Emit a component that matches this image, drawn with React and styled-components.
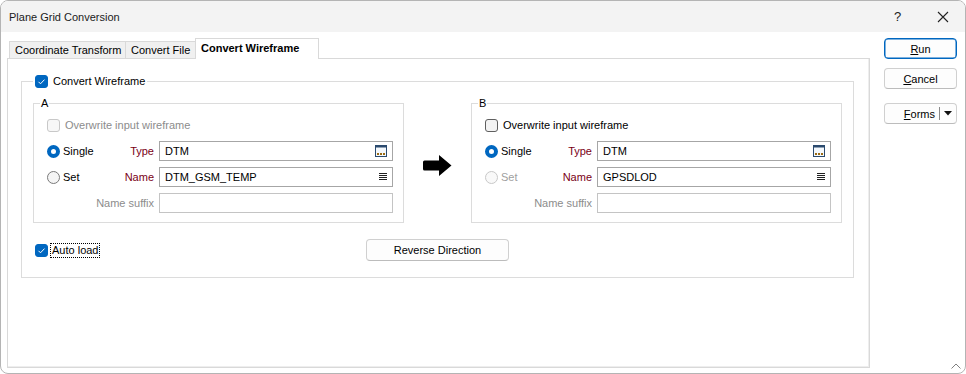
import React from "react"
import styled, { createGlobalStyle } from "styled-components"

const GlobalStyle = createGlobalStyle`
  html, body {
    margin: 0;
    padding: 0;
    background: #fff;
  }
  body {
    font-family: "Liberation Sans", Arial, sans-serif;
    font-size: 11px;
    color: #000;
  }
`

function CheckBox({ checked, disabled }) {
  return (
    <Box $checked={checked} $disabled={disabled}>
      {checked && (
        <svg width="13" height="13" viewBox="0 0 13 13">
          <polyline
            points="3.5,6.8 5.5,8.8 9.5,4.6"
            fill="none"
            stroke="#fff"
            strokeWidth="1"
          />
        </svg>
      )}
    </Box>
  )
}

function Radio({ checked, disabled }) {
  return <RadioDot $checked={checked} $disabled={disabled} />
}

function BrowseIcon() {
  return (
    <svg width="12" height="12" viewBox="0 0 12 12">
      <rect x="0.5" y="0.5" width="11" height="11" fill="#f4f8fc" stroke="#2b4a6e" />
      <rect x="0.5" y="0.5" width="11" height="2" fill="#2b4a6e" />
      <rect x="2" y="8" width="2" height="2" fill="#9a6a12" />
      <rect x="5" y="8" width="2" height="2" fill="#9a6a12" />
      <rect x="8" y="8" width="2" height="2" fill="#9a6a12" />
    </svg>
  )
}

function ListIcon() {
  return (
    <svg width="8" height="8" viewBox="0 0 8 8">
      <rect x="0" y="0" width="8" height="1" fill="#222" />
      <rect x="0" y="2" width="8" height="1" fill="#222" />
      <rect x="0" y="4" width="8" height="1" fill="#222" />
      <rect x="0" y="6" width="8" height="1" fill="#222" />
    </svg>
  )
}

function Field({ value, icon, disabled }) {
  return (
    <Input $disabled={disabled}>
      <span>{value}</span>
      {icon === "browse" && <BrowseIcon />}
      {icon === "list" && <ListIcon />}
    </Input>
  )
}

function WireframeGroup({ title, overwriteDisabled, setDisabled, name }) {
  return (
    <SubGroup>
      <SubLegend>{title}</SubLegend>
      <FormGrid>
        <CheckRow $disabled={overwriteDisabled}>
          <CheckBox disabled={overwriteDisabled} />
          Overwrite input wireframe
        </CheckRow>
        <RadioLabel>
          <Radio checked />
          Single
        </RadioLabel>
        <FieldLabel>Type</FieldLabel>
        <Field value="DTM" icon="browse" />
        <RadioLabel $disabled={setDisabled}>
          <Radio disabled={setDisabled} />
          Set
        </RadioLabel>
        <FieldLabel>Name</FieldLabel>
        <Field value={name} icon="list" />
        <span />
        <FieldLabel $muted>Name suffix</FieldLabel>
        <Field value="" disabled />
      </FormGrid>
    </SubGroup>
  )
}

export default function App() {
  return (
    <>
      <GlobalStyle />
      <Window>
        <TitleBar>
          <TitleText>Plane Grid Conversion</TitleText>
          <TitleButton>?</TitleButton>
          <TitleButton>
            <svg width="12" height="12" viewBox="0 0 12 12">
              <path d="M1 1 L11 11 M11 1 L1 11" stroke="#222" strokeWidth="1.1" />
            </svg>
          </TitleButton>
        </TitleBar>

        <Body>
          <TabArea>
            <TabStrip>
              <Tab $w={117}>Coordinate Transform</Tab>
              <Tab $w={71}>Convert File</Tab>
              <Tab $w={124} $active>
                Convert Wireframe
              </Tab>
            </TabStrip>
            <Panel>
              <MainGroup>
                <MainLegend>
                  <CheckBox checked />
                  Convert Wireframe
                </MainLegend>
                <GroupRow>
                  <WireframeGroup
                    title="A"
                    overwriteDisabled
                    name="DTM_GSM_TEMP"
                  />
                  <ArrowCell>
                    <svg width="29" height="21" viewBox="0 0 29 21">
                      <path
                        d="M1.5 5.5 H16 V0 L28.5 10.5 L16 21 V15.5 H1.5 Q0 15.5 0 14 V7 Q0 5.5 1.5 5.5 Z"
                        fill="#000"
                      />
                    </svg>
                  </ArrowCell>
                  <WireframeGroup title="B" setDisabled name="GPSDLOD" />
                </GroupRow>
                <BottomRow>
                  <AutoLoad>
                    <CheckBox checked />
                    <FocusLabel>Auto load</FocusLabel>
                  </AutoLoad>
                  <PushButton $w={143} $h={22}>
                    Reverse Direction
                  </PushButton>
                  <span />
                </BottomRow>
              </MainGroup>
            </Panel>
          </TabArea>

          <ButtonColumn>
            <PushButton $primary>
              <u>R</u>un
            </PushButton>
            <PushButton $top={9}>
              <u>C</u>ancel
            </PushButton>
            <SplitButton>
              <SplitText>
                <u>F</u>orms
              </SplitText>
              <SplitDivider />
              <SplitCaret>
                <svg width="8" height="5" viewBox="0 0 8 5">
                  <path d="M0 0 H8 L4 4.5 Z" fill="#111" />
                </svg>
              </SplitCaret>
            </SplitButton>
          </ButtonColumn>
        </Body>

        <Grip>
          <svg width="10" height="6" viewBox="0 0 10 6">
            <path d="M0.5 5.5 L5 1 L9.5 5.5" fill="none" stroke="#808080" strokeWidth="1" />
          </svg>
        </Grip>
      </Window>
    </>
  )
}

const Window = styled.div`
  position: relative;
  box-sizing: border-box;
  width: 966px;
  height: 374px;
  border: 1px solid #b4b4b4;
  border-radius: 8px;
  overflow: hidden;
  background: #fff;
  display: flex;
  flex-direction: column;
`

const TitleBar = styled.div`
  flex-shrink: 0;
  height: 31px;
  background: #f3f3f3;
  display: flex;
  align-items: center;
  padding-left: 8px;
  font-size: 11px;
  color: #1b1b1b;
`

const TitleText = styled.div`
  flex: 1;
`

const TitleButton = styled.div`
  width: 45px;
  height: 31px;
  display: flex;
  align-items: center;
  justify-content: center;
  font-size: 13px;
  color: #222;
`

const Body = styled.div`
  flex: 1;
  display: flex;
  padding: 6px 0 0 6px;
`

const TabArea = styled.div`
  width: 863px;
  display: flex;
  flex-direction: column;
`

const TabStrip = styled.div`
  height: 20px;
  display: flex;
  align-items: flex-end;
  padding-left: 2px;
`

const Tab = styled.div`
  position: relative;
  box-sizing: border-box;
  width: ${(p) => p.$w}px;
  height: ${(p) => (p.$active ? 21 : 17)}px;
  margin-left: -1px;
  margin-bottom: ${(p) => (p.$active ? -1 : 0)}px;
  border: 1px solid #d9d9d9;
  border-bottom: none;
  background: ${(p) => (p.$active ? "#fff" : "#f0f0f0")};
  font-weight: ${(p) => (p.$active ? "bold" : "normal")};
  display: flex;
  align-items: center;
  padding: 0 0 ${(p) => (p.$active ? 2 : 0)}px 5px;
  white-space: nowrap;
  z-index: ${(p) => (p.$active ? 2 : 0)};

  &:first-child {
    margin-left: 0;
  }
`

const Panel = styled.div`
  box-sizing: border-box;
  width: 863px;
  height: 310px;
  border: 1px solid #d9d9d9;
  box-shadow: inset -1px -1px 0 #eeeeee;
  padding: 22px 0 0 13px;
`

const MainGroup = styled.div`
  position: relative;
  box-sizing: border-box;
  width: 833px;
  height: 197px;
  border: 1px solid #dcdcdc;
  padding: 21px 11px 0 11px;
`

const MainLegend = styled.div`
  position: absolute;
  top: -7px;
  left: 11px;
  display: flex;
  align-items: center;
  gap: 5px;
  padding: 0 2px;
  background: #fff;
  line-height: 13px;
`

const GroupRow = styled.div`
  display: flex;
  align-items: flex-start;
`

const SubGroup = styled.div`
  position: relative;
  box-sizing: border-box;
  width: 371px;
  height: 120px;
  border: 1px solid #dcdcdc;
  padding: 11px 10px 9px 13px;
`

const SubLegend = styled.div`
  position: absolute;
  top: -8px;
  left: 6px;
  padding: 0 1px;
  background: #fff;
  line-height: 14px;
`

const FormGrid = styled.div`
  display: grid;
  grid-template-columns: 60px 52px 234px;
  grid-auto-rows: 20px;
  row-gap: 6px;
  align-items: center;
`

const CheckRow = styled.div`
  grid-column: 1 / -1;
  display: flex;
  align-items: center;
  gap: 5px;
  color: ${(p) => (p.$disabled ? "#8c8c8c" : "#000")};
`

const RadioLabel = styled.div`
  display: flex;
  align-items: center;
  gap: 3px;
  color: ${(p) => (p.$disabled ? "#a0a0a0" : "#000")};
`

const FieldLabel = styled.div`
  justify-self: end;
  padding-right: 5px;
  color: ${(p) => (p.$muted ? "#8c8c8c" : "#7a0016")};
  white-space: nowrap;
`

const Input = styled.div`
  box-sizing: border-box;
  height: 20px;
  border: 1px solid ${(p) => (p.$disabled ? "#c4c4c4" : "#a6a6a6")};
  background: #fff;
  display: flex;
  align-items: center;
  justify-content: space-between;
  padding: 0 5px 0 5px;
`

const Box = styled.span`
  box-sizing: border-box;
  flex-shrink: 0;
  width: 13px;
  height: 13px;
  border-radius: 3px;
  display: inline-flex;
  border: 1px solid
    ${(p) => (p.$checked ? "#0067c0" : p.$disabled ? "#c8c8c8" : "#5f5f5f")};
  background: ${(p) =>
    p.$checked ? "#0067c0" : p.$disabled ? "#f7f7f7" : "#f3f3f3"};

  svg {
    margin: -1px;
  }
`

const RadioDot = styled.span`
  box-sizing: border-box;
  flex-shrink: 0;
  width: 13px;
  height: 13px;
  border-radius: 50%;
  border: ${(p) =>
    p.$checked
      ? "4px solid #0067c0"
      : `1px solid ${p.$disabled ? "#c8c8c8" : "#7a7a7a"}`};
  background: ${(p) => (p.$checked ? "#fff" : p.$disabled ? "#f9f9f9" : "#f5f5f5")};
`

const ArrowCell = styled.div`
  flex: 1;
  display: flex;
  justify-content: center;
  padding-top: 52px;
`

const BottomRow = styled.div`
  display: grid;
  grid-template-columns: 1fr auto 1fr;
  align-items: center;
  margin-top: 16px;
`

const AutoLoad = styled.div`
  display: flex;
  align-items: center;
  gap: 3px;
  padding-left: 2px;
`

const FocusLabel = styled.span`
  padding: 0 1px;
  line-height: 13px;
  outline: 1px dotted #000;
`

const ButtonColumn = styled.div`
  width: 73px;
  margin-left: 14px;
  display: flex;
  flex-direction: column;
`

const PushButton = styled.div`
  box-sizing: border-box;
  width: ${(p) => p.$w || 73}px;
  height: ${(p) => p.$h || 21}px;
  margin-top: ${(p) => p.$top || 0}px;
  border: 1px solid ${(p) => (p.$primary ? "#0067c0" : "#d0d0d0")};
  box-shadow: ${(p) => (p.$primary ? "inset 0 0 0 0.5px #0067c0" : "none")};
  border-bottom-color: ${(p) => (p.$primary ? "#0067c0" : "#bcbcbc")};
  border-radius: 4px;
  background: #fdfdfd;
  display: flex;
  align-items: center;
  justify-content: center;
`

const SplitButton = styled.div`
  box-sizing: border-box;
  width: 73px;
  height: 21px;
  margin-top: 14px;
  border: 1px solid #d0d0d0;
  border-bottom-color: #bcbcbc;
  border-radius: 4px;
  background: #fdfdfd;
  display: flex;
  align-items: center;
`

const SplitText = styled.span`
  flex: 1;
  text-align: right;
  padding-right: 4px;
`

const SplitDivider = styled.span`
  width: 1px;
  height: 13px;
  background: #8a8a8a;
`

const SplitCaret = styled.span`
  width: 16px;
  display: flex;
  justify-content: center;
`

const Grip = styled.div`
  position: absolute;
  right: 4px;
  bottom: 4px;
  display: flex;
`
